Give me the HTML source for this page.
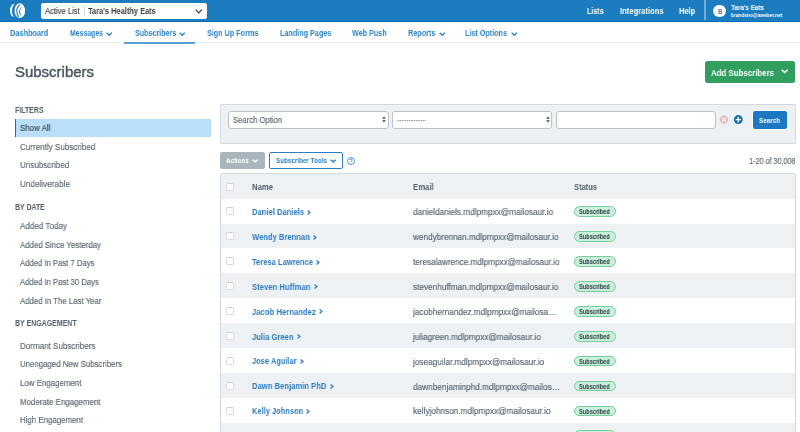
<!DOCTYPE html><html><head><meta charset="utf-8"><style>
*{margin:0;padding:0;box-sizing:border-box}
html,body{width:800px;height:432px;overflow:hidden;background:#fff;font-family:"Liberation Sans",sans-serif}
.t{position:absolute;white-space:nowrap;will-change:transform}
.ic{position:absolute;overflow:visible}
.box{position:absolute}
</style></head><body>
<div class="box" style="left:0;top:0;width:800px;height:21.7px;background:#1b7cc0;border-bottom:1.6px solid #0d6cb5"></div>
<svg class="ic" style="left:9px;top:3px" width="18" height="16" viewBox="0 0 18 16">
<path d="M3.9 1.1 C2.0 2.8 1.0 5.0 1.0 7.4 C1.0 9.9 1.9 12.0 3.6 13.6 C4.0 13.7 4.4 13.6 4.7 13.4 C3.4 11.6 3.0 9.6 3.0 7.4 C3.0 5.2 3.8 3.0 5.6 1.3 C5.1 1.0 4.4 1.0 3.9 1.1Z" fill="#fff"/>
<ellipse cx="10.8" cy="7.7" rx="5.3" ry="7.35" fill="#fff"/>
<path d="M10.8 1.7 C8.6 3.4 7.7 5.6 7.8 8.2 C7.9 10.6 8.6 12.6 9.6 13.9" fill="none" stroke="#1b7cc0" stroke-width="1.15"/>
<path d="M12.6 4.6 C11.0 5.8 10.4 7.3 10.5 8.9 C10.6 10.4 11.1 11.6 11.8 12.4" fill="none" stroke="#1b7cc0" stroke-width="1.0"/>
</svg>
<div class="box" style="left:41px;top:3px;width:165.5px;height:15.5px;background:#fff;border-radius:2.5px"></div>
<div class="box" style="left:84px;top:5.5px;width:1px;height:10.5px;background:#d7dde2"></div>
<svg class="ic" style="left:195px;top:9.2px" width="7.5" height="4.5" viewBox="0 0 7.5 4.5"><path d="M0.65 0.65 L3.75 3.85 L6.85 0.65" fill="none" stroke="#333d44" stroke-width="1.3"/></svg>
<div class="box" style="left:704.3px;top:0;width:1.5px;height:20.1px;background:#72aedd"></div>
<div class="box" style="left:713.3px;top:4.6px;width:12.9px;height:12.8px;border-radius:50%;background:#fff"></div>
<div class="box" style="left:0;top:42px;width:800px;height:1.2px;background:#e9edf0"></div>
<svg class="ic" style="left:106.2px;top:31.8px" width="6.5" height="4.0" viewBox="0 0 6.5 4.0"><path d="M0.675 0.675 L3.25 3.325 L5.825 0.675" fill="none" stroke="#2d84c6" stroke-width="1.35"/></svg>
<svg class="ic" style="left:179.4px;top:31.8px" width="6.5" height="4.0" viewBox="0 0 6.5 4.0"><path d="M0.675 0.675 L3.25 3.325 L5.825 0.675" fill="none" stroke="#2d84c6" stroke-width="1.35"/></svg>
<svg class="ic" style="left:438.8px;top:31.8px" width="6.5" height="4.0" viewBox="0 0 6.5 4.0"><path d="M0.675 0.675 L3.25 3.325 L5.825 0.675" fill="none" stroke="#2d84c6" stroke-width="1.35"/></svg>
<svg class="ic" style="left:510.8px;top:31.8px" width="6.5" height="4.0" viewBox="0 0 6.5 4.0"><path d="M0.675 0.675 L3.25 3.325 L5.825 0.675" fill="none" stroke="#2d84c6" stroke-width="1.35"/></svg>
<div class="box" style="left:123.8px;top:41.9px;width:71.2px;height:1.7px;background:#5aa0d6"></div>
<div class="box" style="left:704.8px;top:61px;width:90.4px;height:22px;background:#2f9e5f;border-radius:2.5px"></div>
<svg class="ic" style="left:781.2px;top:69.4px" width="7.4" height="4.3" viewBox="0 0 7.4 4.3"><path d="M0.725 0.725 L3.7 3.5749999999999997 L6.675000000000001 0.725" fill="none" stroke="#fff" stroke-width="1.45"/></svg>
<div class="box" style="left:14.5px;top:119px;width:196.5px;height:18px;background:#b9dffa;border-left:1.5px solid #1b6fb0"></div>
<div class="box" style="left:219.5px;top:104px;width:576px;height:39.5px;background:#eef1f4;border:1px solid #d3d9de;border-radius:2px"></div>
<div class="box" style="left:228px;top:111.2px;width:161px;height:17.8px;background:#fff;border:1px solid #b8c3cb;border-radius:3px"></div>
<div class="box" style="left:392.2px;top:111.2px;width:160px;height:17.8px;background:#fff;border:1px solid #b8c3cb;border-radius:3px"></div>
<div class="box" style="left:556.2px;top:111.2px;width:160px;height:17.8px;background:#fff;border:1px solid #b8c3cb;border-radius:3px"></div>
<svg class="ic" style="left:397px;top:120px" width="29" height="1.2" viewBox="0 0 29 1.2"><line x1="0" y1="0.6" x2="29" y2="0.6" stroke="#7d8890" stroke-width="0.9" stroke-dasharray="1.6 0.78"/></svg>
<svg class="ic" style="left:382px;top:116.3px" width="4" height="7" viewBox="0 0 4 7"><path d="M0.2 2.8 L2 0.4 L3.8 2.8Z M0.2 4.2 L2 6.6 L3.8 4.2Z" fill="#3c464e"/></svg>
<svg class="ic" style="left:545.8px;top:116.3px" width="4" height="7" viewBox="0 0 4 7"><path d="M0.2 2.8 L2 0.4 L3.8 2.8Z M0.2 4.2 L2 6.6 L3.8 4.2Z" fill="#3c464e"/></svg>
<svg class="ic" style="left:719px;top:115px" width="9" height="9" viewBox="0 0 9 9"><circle cx="4.9" cy="4.6" r="4.2" fill="#e6b9bf"/><path d="M3.1 2.8 L6.7 6.4 M6.7 2.8 L3.1 6.4" stroke="#f4f6f8" stroke-width="1.3"/></svg>
<svg class="ic" style="left:734px;top:115px" width="9" height="9" viewBox="0 0 9 9"><circle cx="4.3" cy="4.6" r="4.5" fill="#1b6fb3"/><path d="M4.3 2.0 V7.2 M1.7 4.6 H6.9" stroke="#fff" stroke-width="1.35"/></svg>
<div class="box" style="left:752.8px;top:111.1px;width:33.9px;height:18px;background:#1b78c1;border-radius:2px;box-shadow:0 0 0 0.8px rgba(255,255,255,0.85)"></div>
<div class="box" style="left:219.8px;top:152px;width:44.8px;height:16.8px;background:#a8b5bd;border-radius:2px"></div>
<svg class="ic" style="left:251.5px;top:159.1px" width="6.5" height="3.6" viewBox="0 0 6.5 3.6"><path d="M0.7 0.7 L3.25 2.9000000000000004 L5.8 0.7" fill="none" stroke="#fff" stroke-width="1.4"/></svg>
<div class="box" style="left:268.9px;top:151.8px;width:74px;height:17.3px;border:1px solid #2b80c4;border-radius:2px;background:#fff"></div>
<svg class="ic" style="left:329.5px;top:159.1px" width="6.5" height="3.6" viewBox="0 0 6.5 3.6"><path d="M0.7 0.7 L3.25 2.9000000000000004 L5.8 0.7" fill="none" stroke="#2b7dc0" stroke-width="1.4"/></svg>
<svg class="ic" style="left:347px;top:156.6px" width="8" height="8" viewBox="0 0 8 8"><circle cx="4" cy="4" r="3.5" fill="none" stroke="#2b7dc0" stroke-width="0.8"/><path d="M2.8 3.1 C2.8 2.3 3.4 1.9 4 1.9 C4.7 1.9 5.2 2.4 5.2 3 C5.2 3.8 4.1 4 4.1 4.8" fill="none" stroke="#2b7dc0" stroke-width="0.8"/><circle cx="4.1" cy="5.9" r="0.45" fill="#2b7dc0"/></svg>
<div class="box" style="left:219.5px;top:173.2px;width:576px;height:270px;border:1px solid #d3d9de;border-radius:2px;background:#fff"></div>
<div class="box" style="left:220.5px;top:174.2px;width:574px;height:24.4px;background:#eef1f4"></div>
<div class="box" style="left:226.1px;top:182.50px;width:8px;height:8px;border:1px solid #d6dce0;border-top-color:#c9d0d5;border-radius:2px;background:#fff"></div>
<div class="box" style="left:226.1px;top:207.20px;width:8px;height:8px;border:1px solid #d6dce0;border-top-color:#c9d0d5;border-radius:2px;background:#fff"></div>
<div class="box" style="left:573.9px;top:205.90px;width:42px;height:10.9px;background:#c9f0db;border:1px solid #79cc9b;border-radius:5.5px"></div>
<div class="box" style="left:220.5px;top:223.55px;width:574px;height:24.95px;background:#eef1f4"></div>
<div class="box" style="left:226.1px;top:232.15px;width:8px;height:8px;border:1px solid #d6dce0;border-top-color:#c9d0d5;border-radius:2px;background:#fff"></div>
<div class="box" style="left:573.9px;top:230.85px;width:42px;height:10.9px;background:#c9f0db;border:1px solid #79cc9b;border-radius:5.5px"></div>
<div class="box" style="left:226.1px;top:257.10px;width:8px;height:8px;border:1px solid #d6dce0;border-top-color:#c9d0d5;border-radius:2px;background:#fff"></div>
<div class="box" style="left:573.9px;top:255.80px;width:42px;height:10.9px;background:#c9f0db;border:1px solid #79cc9b;border-radius:5.5px"></div>
<div class="box" style="left:220.5px;top:273.45px;width:574px;height:24.95px;background:#eef1f4"></div>
<div class="box" style="left:226.1px;top:282.05px;width:8px;height:8px;border:1px solid #d6dce0;border-top-color:#c9d0d5;border-radius:2px;background:#fff"></div>
<div class="box" style="left:573.9px;top:280.75px;width:42px;height:10.9px;background:#c9f0db;border:1px solid #79cc9b;border-radius:5.5px"></div>
<div class="box" style="left:226.1px;top:307.00px;width:8px;height:8px;border:1px solid #d6dce0;border-top-color:#c9d0d5;border-radius:2px;background:#fff"></div>
<div class="box" style="left:573.9px;top:305.70px;width:42px;height:10.9px;background:#c9f0db;border:1px solid #79cc9b;border-radius:5.5px"></div>
<div class="box" style="left:220.5px;top:323.35px;width:574px;height:24.95px;background:#eef1f4"></div>
<div class="box" style="left:226.1px;top:331.95px;width:8px;height:8px;border:1px solid #d6dce0;border-top-color:#c9d0d5;border-radius:2px;background:#fff"></div>
<div class="box" style="left:573.9px;top:330.65px;width:42px;height:10.9px;background:#c9f0db;border:1px solid #79cc9b;border-radius:5.5px"></div>
<div class="box" style="left:226.1px;top:356.90px;width:8px;height:8px;border:1px solid #d6dce0;border-top-color:#c9d0d5;border-radius:2px;background:#fff"></div>
<div class="box" style="left:573.9px;top:355.60px;width:42px;height:10.9px;background:#c9f0db;border:1px solid #79cc9b;border-radius:5.5px"></div>
<div class="box" style="left:220.5px;top:373.25px;width:574px;height:24.95px;background:#eef1f4"></div>
<div class="box" style="left:226.1px;top:381.85px;width:8px;height:8px;border:1px solid #d6dce0;border-top-color:#c9d0d5;border-radius:2px;background:#fff"></div>
<div class="box" style="left:573.9px;top:380.55px;width:42px;height:10.9px;background:#c9f0db;border:1px solid #79cc9b;border-radius:5.5px"></div>
<div class="box" style="left:226.1px;top:406.80px;width:8px;height:8px;border:1px solid #d6dce0;border-top-color:#c9d0d5;border-radius:2px;background:#fff"></div>
<div class="box" style="left:573.9px;top:405.50px;width:42px;height:10.9px;background:#c9f0db;border:1px solid #79cc9b;border-radius:5.5px"></div>
<div class="box" style="left:220.5px;top:423.15px;width:574px;height:24.95px;background:#eef1f4"></div>
<div class="box" style="left:226.1px;top:431.75px;width:8px;height:8px;border:1px solid #d6dce0;border-top-color:#c9d0d5;border-radius:2px;background:#fff"></div>
<div class="box" style="left:573.9px;top:430.45px;width:42px;height:10.9px;background:#c9f0db;border:1px solid #79cc9b;border-radius:5.5px"></div>
<div class="t" style="left:44.7px;top:7.25px;font-size:8.3px;line-height:8.3px;-webkit-text-stroke:0.15px #3a434a;color:#3a434a;transform:scaleX(0.9150);transform-origin:0 0;">Active List</div>
<div class="t" style="left:88px;top:6.98px;font-size:8.61px;line-height:8.61px;font-weight:bold;color:#313b42;transform:scaleX(0.8651);transform-origin:0 0;">Tara&#39;s Healthy Eats</div>
<div class="t" style="left:586.5px;top:6.42px;font-size:9.39px;line-height:9.39px;font-weight:bold;color:#fff;transform:scaleX(0.7537);transform-origin:0 0;">Lists</div>
<div class="t" style="left:619.5px;top:6.42px;font-size:9.39px;line-height:9.39px;font-weight:bold;color:#fff;transform:scaleX(0.8107);transform-origin:0 0;">Integrations</div>
<div class="t" style="left:679.4px;top:6.42px;font-size:9.39px;line-height:9.39px;font-weight:bold;color:#fff;transform:scaleX(0.8018);transform-origin:0 0;">Help</div>
<div class="t" style="left:718.0px;top:7.64px;font-size:7.83px;line-height:7.83px;font-weight:bold;color:#68737b;transform:scaleX(0.8133);transform-origin:0 0;">B</div>
<div class="t" style="left:731px;top:4.14px;font-size:7.36px;line-height:7.36px;font-weight:bold;color:#fff;transform:scaleX(0.8585);transform-origin:0 0;">Tara&#39;s Eats</div>
<div class="t" style="left:731px;top:12.61px;font-size:5.63px;line-height:5.63px;font-weight:bold;color:#fff;transform:scaleX(0.8496);transform-origin:0 0;">brandono@aweber.net</div>
<div class="t" style="left:10px;top:28.88px;font-size:9.08px;line-height:9.08px;font-weight:bold;color:#2d84c6;transform:scaleX(0.8066);transform-origin:0 0;">Dashboard</div>
<div class="t" style="left:70px;top:28.88px;font-size:9.08px;line-height:9.08px;font-weight:bold;color:#2d84c6;transform:scaleX(0.7603);transform-origin:0 0;">Messages</div>
<div class="t" style="left:134.5px;top:28.88px;font-size:9.08px;line-height:9.08px;font-weight:bold;color:#2d84c6;transform:scaleX(0.7859);transform-origin:0 0;">Subscribers</div>
<div class="t" style="left:207px;top:28.88px;font-size:9.08px;line-height:9.08px;font-weight:bold;color:#2d84c6;transform:scaleX(0.7938);transform-origin:0 0;">Sign Up Forms</div>
<div class="t" style="left:279.5px;top:28.88px;font-size:9.08px;line-height:9.08px;font-weight:bold;color:#2d84c6;transform:scaleX(0.7936);transform-origin:0 0;">Landing Pages</div>
<div class="t" style="left:351.5px;top:28.88px;font-size:9.08px;line-height:9.08px;font-weight:bold;color:#2d84c6;transform:scaleX(0.7949);transform-origin:0 0;">Web Push</div>
<div class="t" style="left:407.5px;top:28.88px;font-size:9.08px;line-height:9.08px;font-weight:bold;color:#2d84c6;transform:scaleX(0.8015);transform-origin:0 0;">Reports</div>
<div class="t" style="left:465px;top:28.88px;font-size:9.08px;line-height:9.08px;font-weight:bold;color:#2d84c6;transform:scaleX(0.7932);transform-origin:0 0;">List Options</div>
<div class="t" style="left:14.9px;top:64.92px;font-size:14.8px;line-height:14.8px;-webkit-text-stroke:0.45px #4b5a62;color:#4b5a62;transform:scaleX(1.0112);transform-origin:0 0;">Subscribers</div>
<div class="t" style="left:711.4px;top:67.52px;font-size:9.86px;line-height:9.86px;font-weight:bold;color:#fff;transform:scaleX(0.7997);transform-origin:0 0;">Add Subscribers</div>
<div class="t" style="left:14.9px;top:105.65px;font-size:8.77px;line-height:8.77px;font-weight:bold;color:#53616a;transform:scaleX(0.7944);transform-origin:0 0;">FILTERS</div>
<div class="t" style="left:20.2px;top:124.28px;font-size:9.08px;line-height:9.08px;-webkit-text-stroke:0.15px #3d4850;color:#3d4850;transform:scaleX(0.8729);transform-origin:0 0;">Show All</div>
<div class="t" style="left:20.2px;top:142.88px;font-size:9.08px;line-height:9.08px;-webkit-text-stroke:0.15px #59666f;color:#59666f;transform:scaleX(0.8882);transform-origin:0 0;">Currently Subscribed</div>
<div class="t" style="left:20.2px;top:161.48px;font-size:9.08px;line-height:9.08px;-webkit-text-stroke:0.15px #59666f;color:#59666f;transform:scaleX(0.8862);transform-origin:0 0;">Unsubscribed</div>
<div class="t" style="left:20.2px;top:180.08px;font-size:9.08px;line-height:9.08px;-webkit-text-stroke:0.15px #59666f;color:#59666f;transform:scaleX(0.9006);transform-origin:0 0;">Undeliverable</div>
<div class="t" style="left:14.5px;top:203.35px;font-size:8.77px;line-height:8.77px;font-weight:bold;color:#53616a;transform:scaleX(0.7910);transform-origin:0 0;">BY DATE</div>
<div class="t" style="left:19.9px;top:222.28px;font-size:9.08px;line-height:9.08px;-webkit-text-stroke:0.15px #59666f;color:#59666f;transform:scaleX(0.8894);transform-origin:0 0;">Added Today</div>
<div class="t" style="left:19.9px;top:240.88px;font-size:9.08px;line-height:9.08px;-webkit-text-stroke:0.15px #59666f;color:#59666f;transform:scaleX(0.8627);transform-origin:0 0;">Added Since Yesterday</div>
<div class="t" style="left:19.9px;top:259.48px;font-size:9.08px;line-height:9.08px;-webkit-text-stroke:0.15px #59666f;color:#59666f;transform:scaleX(0.8473);transform-origin:0 0;">Added In Past 7 Days</div>
<div class="t" style="left:19.9px;top:278.08px;font-size:9.08px;line-height:9.08px;-webkit-text-stroke:0.15px #59666f;color:#59666f;transform:scaleX(0.8497);transform-origin:0 0;">Added In Past 30 Days</div>
<div class="t" style="left:19.9px;top:296.68px;font-size:9.08px;line-height:9.08px;-webkit-text-stroke:0.15px #59666f;color:#59666f;transform:scaleX(0.8582);transform-origin:0 0;">Added In The Last Year</div>
<div class="t" style="left:14.6px;top:318.85px;font-size:8.77px;line-height:8.77px;font-weight:bold;color:#53616a;transform:scaleX(0.7971);transform-origin:0 0;">BY ENGAGEMENT</div>
<div class="t" style="left:20.1px;top:341.78px;font-size:9.08px;line-height:9.08px;-webkit-text-stroke:0.15px #59666f;color:#59666f;transform:scaleX(0.8843);transform-origin:0 0;">Dormant Subscribers</div>
<div class="t" style="left:20.1px;top:360.43px;font-size:9.08px;line-height:9.08px;-webkit-text-stroke:0.15px #59666f;color:#59666f;transform:scaleX(0.8637);transform-origin:0 0;">Unengaged New Subscribers</div>
<div class="t" style="left:20.1px;top:379.08px;font-size:9.08px;line-height:9.08px;-webkit-text-stroke:0.15px #59666f;color:#59666f;transform:scaleX(0.8674);transform-origin:0 0;">Low Engagement</div>
<div class="t" style="left:20.1px;top:397.73px;font-size:9.08px;line-height:9.08px;-webkit-text-stroke:0.15px #59666f;color:#59666f;transform:scaleX(0.8716);transform-origin:0 0;">Moderate Engagement</div>
<div class="t" style="left:20.1px;top:416.38px;font-size:9.08px;line-height:9.08px;-webkit-text-stroke:0.15px #59666f;color:#59666f;transform:scaleX(0.8667);transform-origin:0 0;">High Engagement</div>
<div class="t" style="left:233.1px;top:116.15px;font-size:8.77px;line-height:8.77px;-webkit-text-stroke:0.15px #5b6770;color:#5b6770;transform:scaleX(0.8743);transform-origin:0 0;">Search Option</div>
<div class="t" style="left:758.9px;top:117.14px;font-size:7.83px;line-height:7.83px;font-weight:bold;color:#fff;transform:scaleX(0.8115);transform-origin:0 0;">Search</div>
<div class="t" style="left:225.9px;top:157.24px;font-size:7.83px;line-height:7.83px;font-weight:bold;color:#fff;transform:scaleX(0.7974);transform-origin:0 0;">Actions</div>
<div class="t" style="left:275.7px;top:157.24px;font-size:7.83px;line-height:7.83px;font-weight:bold;color:#2b7dc0;transform:scaleX(0.8047);transform-origin:0 0;">Subscriber Tools</div>
<div class="t" style="right:5px;top:157.12px;font-size:8.45px;line-height:8.45px;-webkit-text-stroke:0.15px #5b6770;color:#5b6770;transform:scaleX(0.8508);transform-origin:100% 0;">1-20 of 30,008</div>
<div class="t" style="left:251.7px;top:182.95px;font-size:9.23px;line-height:9.23px;font-weight:bold;color:#53616b;transform:scaleX(0.8363);transform-origin:0 0;">Name</div>
<div class="t" style="left:413px;top:182.95px;font-size:9.23px;line-height:9.23px;font-weight:bold;color:#53616b;transform:scaleX(0.8411);transform-origin:0 0;">Email</div>
<div class="t" style="left:574.4px;top:182.95px;font-size:9.23px;line-height:9.23px;font-weight:bold;color:#53616b;transform:scaleX(0.8160);transform-origin:0 0;">Status</div>
<div class="t" style="left:251.9px;top:207.78px;font-size:9.08px;line-height:9.08px;font-weight:bold;color:#2b7cc0;transform:scaleX(0.8395);transform-origin:0 0;">Daniel Daniels</div>
<div class="t" style="left:412.8px;top:207.88px;font-size:8.97px;line-height:8.97px;-webkit-text-stroke:0.15px #56656f;color:#56656f;transform:scaleX(0.9176);transform-origin:0 0;">danieldaniels.mdlpmpxx@mailosaur.io</div>
<div class="t" style="left:579.4px;top:209.28px;font-size:6.73px;line-height:6.73px;font-weight:bold;color:#2c3a41;transform:scaleX(0.8417);transform-origin:0 0;">Subscribed</div>
<div class="t" style="left:251.9px;top:232.73px;font-size:9.08px;line-height:9.08px;font-weight:bold;color:#2b7cc0;transform:scaleX(0.8370);transform-origin:0 0;">Wendy Brennan</div>
<div class="t" style="left:412.8px;top:232.83px;font-size:8.97px;line-height:8.97px;-webkit-text-stroke:0.15px #56656f;color:#56656f;transform:scaleX(0.9135);transform-origin:0 0;">wendybrennan.mdlpmpxx@mailosaur.io</div>
<div class="t" style="left:579.4px;top:234.23px;font-size:6.73px;line-height:6.73px;font-weight:bold;color:#2c3a41;transform:scaleX(0.8417);transform-origin:0 0;">Subscribed</div>
<div class="t" style="left:251.9px;top:257.68px;font-size:9.08px;line-height:9.08px;font-weight:bold;color:#2b7cc0;transform:scaleX(0.8354);transform-origin:0 0;">Teresa Lawrence</div>
<div class="t" style="left:412.8px;top:257.78px;font-size:8.97px;line-height:8.97px;-webkit-text-stroke:0.15px #56656f;color:#56656f;transform:scaleX(0.9085);transform-origin:0 0;">teresalawrence.mdlpmpxx@mailosaur.io</div>
<div class="t" style="left:579.4px;top:259.18px;font-size:6.73px;line-height:6.73px;font-weight:bold;color:#2c3a41;transform:scaleX(0.8417);transform-origin:0 0;">Subscribed</div>
<div class="t" style="left:251.9px;top:282.63px;font-size:9.08px;line-height:9.08px;font-weight:bold;color:#2b7cc0;transform:scaleX(0.8465);transform-origin:0 0;">Steven Huffman</div>
<div class="t" style="left:412.8px;top:282.73px;font-size:8.97px;line-height:8.97px;-webkit-text-stroke:0.15px #56656f;color:#56656f;transform:scaleX(0.9145);transform-origin:0 0;">stevenhuffman.mdlpmpxx@mailosaur.io</div>
<div class="t" style="left:579.4px;top:284.13px;font-size:6.73px;line-height:6.73px;font-weight:bold;color:#2c3a41;transform:scaleX(0.8417);transform-origin:0 0;">Subscribed</div>
<div class="t" style="left:251.9px;top:307.58px;font-size:9.08px;line-height:9.08px;font-weight:bold;color:#2b7cc0;transform:scaleX(0.8474);transform-origin:0 0;">Jacob Hernandez</div>
<div class="t" style="left:412.8px;top:307.68px;font-size:8.97px;line-height:8.97px;-webkit-text-stroke:0.15px #56656f;color:#56656f;transform:scaleX(0.9176);transform-origin:0 0;width:160.8px;overflow:hidden;text-overflow:ellipsis;">jacobhernandez.mdlpmpxx@mailosaur.io</div>
<div class="t" style="left:579.4px;top:309.08px;font-size:6.73px;line-height:6.73px;font-weight:bold;color:#2c3a41;transform:scaleX(0.8417);transform-origin:0 0;">Subscribed</div>
<div class="t" style="left:251.9px;top:332.53px;font-size:9.08px;line-height:9.08px;font-weight:bold;color:#2b7cc0;transform:scaleX(0.8392);transform-origin:0 0;">Julia Green</div>
<div class="t" style="left:412.8px;top:332.63px;font-size:8.97px;line-height:8.97px;-webkit-text-stroke:0.15px #56656f;color:#56656f;transform:scaleX(0.9180);transform-origin:0 0;">juliagreen.mdlpmpxx@mailosaur.io</div>
<div class="t" style="left:579.4px;top:334.03px;font-size:6.73px;line-height:6.73px;font-weight:bold;color:#2c3a41;transform:scaleX(0.8417);transform-origin:0 0;">Subscribed</div>
<div class="t" style="left:251.9px;top:357.48px;font-size:9.08px;line-height:9.08px;font-weight:bold;color:#2b7cc0;transform:scaleX(0.8254);transform-origin:0 0;">Jose Aguilar</div>
<div class="t" style="left:412.8px;top:357.58px;font-size:8.97px;line-height:8.97px;-webkit-text-stroke:0.15px #56656f;color:#56656f;transform:scaleX(0.9155);transform-origin:0 0;">joseaguilar.mdlpmpxx@mailosaur.io</div>
<div class="t" style="left:579.4px;top:358.98px;font-size:6.73px;line-height:6.73px;font-weight:bold;color:#2c3a41;transform:scaleX(0.8417);transform-origin:0 0;">Subscribed</div>
<div class="t" style="left:251.9px;top:382.43px;font-size:9.08px;line-height:9.08px;font-weight:bold;color:#2b7cc0;transform:scaleX(0.8428);transform-origin:0 0;">Dawn Benjamin PhD</div>
<div class="t" style="left:412.8px;top:382.53px;font-size:8.97px;line-height:8.97px;-webkit-text-stroke:0.15px #56656f;color:#56656f;transform:scaleX(0.9176);transform-origin:0 0;width:160.8px;overflow:hidden;text-overflow:ellipsis;">dawnbenjaminphd.mdlpmpxx@mailosaur.io</div>
<div class="t" style="left:579.4px;top:383.93px;font-size:6.73px;line-height:6.73px;font-weight:bold;color:#2c3a41;transform:scaleX(0.8417);transform-origin:0 0;">Subscribed</div>
<div class="t" style="left:251.9px;top:407.38px;font-size:9.08px;line-height:9.08px;font-weight:bold;color:#2b7cc0;transform:scaleX(0.8252);transform-origin:0 0;">Kelly Johnson</div>
<div class="t" style="left:412.8px;top:407.48px;font-size:8.97px;line-height:8.97px;-webkit-text-stroke:0.15px #56656f;color:#56656f;transform:scaleX(0.9186);transform-origin:0 0;">kellyjohnson.mdlpmpxx@mailosaur.io</div>
<div class="t" style="left:579.4px;top:408.88px;font-size:6.73px;line-height:6.73px;font-weight:bold;color:#2c3a41;transform:scaleX(0.8417);transform-origin:0 0;">Subscribed</div>
<div class="t" style="left:251.9px;top:432.33px;font-size:9.08px;line-height:9.08px;font-weight:bold;color:#2b7cc0;transform:scaleX(0.8395);transform-origin:0 0;">Xavier Smith</div>
<div class="t" style="left:412.8px;top:432.43px;font-size:8.97px;line-height:8.97px;-webkit-text-stroke:0.15px #56656f;color:#56656f;transform:scaleX(0.9176);transform-origin:0 0;">xaviersmith.mdlpmpxx@mailosaur.io</div>
<div class="t" style="left:579.4px;top:433.83px;font-size:6.73px;line-height:6.73px;font-weight:bold;color:#2c3a41;transform:scaleX(0.8417);transform-origin:0 0;">Subscribed</div>
<svg class="ic" style="left:307.30px;top:209.60px" width="3.6" height="5" viewBox="0 0 3.6 5"><path d="M0.6 0.6 L2.9 2.5 L0.6 4.4" fill="none" stroke="#2b7cc0" stroke-width="1.25"/></svg>
<svg class="ic" style="left:312.90px;top:234.55px" width="3.6" height="5" viewBox="0 0 3.6 5"><path d="M0.6 0.6 L2.9 2.5 L0.6 4.4" fill="none" stroke="#2b7cc0" stroke-width="1.25"/></svg>
<svg class="ic" style="left:316.20px;top:259.50px" width="3.6" height="5" viewBox="0 0 3.6 5"><path d="M0.6 0.6 L2.9 2.5 L0.6 4.4" fill="none" stroke="#2b7cc0" stroke-width="1.25"/></svg>
<svg class="ic" style="left:313.70px;top:284.45px" width="3.6" height="5" viewBox="0 0 3.6 5"><path d="M0.6 0.6 L2.9 2.5 L0.6 4.4" fill="none" stroke="#2b7cc0" stroke-width="1.25"/></svg>
<svg class="ic" style="left:318.90px;top:309.40px" width="3.6" height="5" viewBox="0 0 3.6 5"><path d="M0.6 0.6 L2.9 2.5 L0.6 4.4" fill="none" stroke="#2b7cc0" stroke-width="1.25"/></svg>
<svg class="ic" style="left:296.70px;top:334.35px" width="3.6" height="5" viewBox="0 0 3.6 5"><path d="M0.6 0.6 L2.9 2.5 L0.6 4.4" fill="none" stroke="#2b7cc0" stroke-width="1.25"/></svg>
<svg class="ic" style="left:299.90px;top:359.30px" width="3.6" height="5" viewBox="0 0 3.6 5"><path d="M0.6 0.6 L2.9 2.5 L0.6 4.4" fill="none" stroke="#2b7cc0" stroke-width="1.25"/></svg>
<svg class="ic" style="left:329.60px;top:384.25px" width="3.6" height="5" viewBox="0 0 3.6 5"><path d="M0.6 0.6 L2.9 2.5 L0.6 4.4" fill="none" stroke="#2b7cc0" stroke-width="1.25"/></svg>
<svg class="ic" style="left:306.40px;top:409.20px" width="3.6" height="5" viewBox="0 0 3.6 5"><path d="M0.6 0.6 L2.9 2.5 L0.6 4.4" fill="none" stroke="#2b7cc0" stroke-width="1.25"/></svg>
<svg class="ic" style="left:301.37px;top:434.15px" width="3.6" height="5" viewBox="0 0 3.6 5"><path d="M0.6 0.6 L2.9 2.5 L0.6 4.4" fill="none" stroke="#2b7cc0" stroke-width="1.25"/></svg>
</body></html>
